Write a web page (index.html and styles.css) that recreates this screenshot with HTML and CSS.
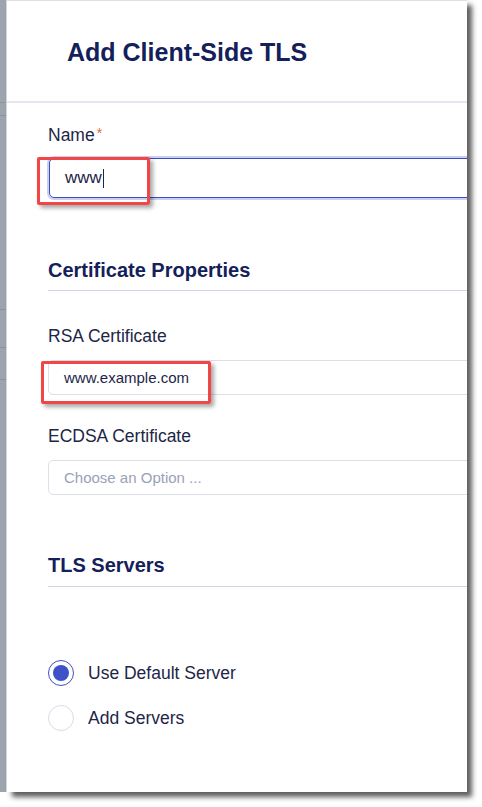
FILE: index.html
```html
<!DOCTYPE html>
<html>
<head>
<meta charset="utf-8">
<link rel="stylesheet" href="styles.css">
</head>
<body>
<div class="page">
  <div class="backdrop">
    <div class="bd-row r1"></div>
    <div class="bd-row r2"></div>
    <div class="bd-row r3"></div>
    <div class="bd-row r4"></div>
    <div class="bd-row r5"></div>
  </div>
  <div class="drawer">
    <header class="drawer-head">
      <h1 class="title">Add Client-Side TLS</h1>
    </header>
    <div class="drawer-body">
      <div class="field field-name">
        <label class="label">Name<span class="req">*</span></label>
        <div class="input input-focus"><span class="value value-lg">www</span><span class="caret"></span></div>
        <div class="annot annot-name"></div>
      </div>

      <h2 class="section">Certificate Properties</h2>

      <div class="field field-rsa">
        <label class="label">RSA Certificate</label>
        <div class="input"><span class="value">www.example.com</span></div>
        <div class="annot annot-rsa"></div>
      </div>

      <div class="field field-ecdsa">
        <label class="label">ECDSA Certificate</label>
        <div class="input"><span class="placeholder">Choose an Option ...</span></div>
      </div>

      <h2 class="section section-tls">TLS Servers</h2>

      <div class="radios">
        <div class="radio-row">
          <span class="radio checked"><span class="dot"></span></span>
          <span class="radio-label">Use Default Server</span>
        </div>
        <div class="radio-row">
          <span class="radio"></span>
          <span class="radio-label">Add Servers</span>
        </div>
      </div>
    </div>
  </div>
</div>
</body>
</html>
```
FILE: styles.css
```css
* { box-sizing: border-box; }
html, body { margin: 0; padding: 0; background: #ffffff; }
body {
  font-family: "Liberation Sans", Arial, sans-serif;
  color: #1d2647;
}
.page {
  display: flex;
  align-items: flex-start;
  width: 482px;
  height: 807px;
  overflow: hidden;
}
.backdrop {
  width: 7px;
  height: 792px;
  background: #9ea4ae;
  border-right: 1px solid #d4d7dd;
  display: flex;
  flex-direction: column;
}
.bd-row { border-bottom: 1px solid #8e949e; flex: none; }
.r1 { height: 103px; }
.r2 { height: 13px; }
.r3 { height: 194px; }
.r4 { height: 38px; }
.r5 { height: 32px; }

.drawer {
  position: relative;
  width: 460px;
  height: 792px;
  background: #ffffff;
  border-top: 1px solid #e0e0e0;
  box-shadow: 5px 5px 5px rgba(40, 40, 40, 0.75);
  overflow: hidden;
  flex: none;
}
.drawer-head {
  height: 102px;
  border-bottom: 2px solid #e4e7f2;
  display: flex;
  align-items: center;
  padding-left: 60px;
}
.title {
  margin: 0;
  font-size: 25px;
  font-weight: 700;
  color: #14205a;
  line-height: 30px;
  padding-top: 2px;
}
.drawer-body {
  padding-left: 41px;
}
.field { position: relative; }
.label {
  display: block;
  font-size: 17.5px;
  line-height: 20px;
  color: #1d2647;
}
.req { color: #f0643c; font-size: 14px; vertical-align: top; margin-left: 2px; position: relative; top: -2px; }
.field-name { padding-top: 22px; }
.field-name .label { margin-bottom: 13px; }
.input {
  width: 480px;
  height: 35px;
  border: 1px solid #dcdfe8;
  border-radius: 5px;
  display: flex;
  align-items: center;
  padding-left: 15px;
}
.input-focus {
  margin-left: 1px;
  height: 40px;
  border-color: #3b4ec0;
  box-shadow: 0 0 0 2px #cbd0f1;
}
.value { font-size: 15px; color: #1d2647; }
.value-lg { font-size: 17px; }
.caret {
  display: inline-block;
  width: 1px;
  height: 19px;
  background: #1d2647;
  margin-left: 1px;
}
.placeholder { font-size: 15px; color: #9aa1b5; }

.annot {
  position: absolute;
  border: 3px solid #f24646;
  border-radius: 2px;
  box-shadow: 3px 3px 4px rgba(0, 0, 0, 0.35);
}
.annot-name { left: -11px; top: 54px; width: 113px; height: 48px; }
.annot-rsa { left: -7px; top: 70px; width: 170px; height: 43px; }

.section {
  margin: 0;
  font-size: 20px;
  font-weight: 700;
  line-height: 24px;
  color: #14205a;
  padding-bottom: 8px;
  border-bottom: 1px solid #d2d6e2;
  width: 440px;
}
.field-name + .section { margin-top: 60px; }
.field-rsa { padding-top: 35px; }
.field-rsa .label, .field-ecdsa .label { margin-bottom: 14px; }
.field-ecdsa { padding-top: 31px; }
.section-tls { margin-top: 58px; padding-bottom: 9px; }

.radios {
  padding-top: 73px;
  display: flex;
  flex-direction: column;
  gap: 19px;
}
.radio-row {
  display: flex;
  align-items: center;
  height: 26px;
}
.radio {
  width: 26px;
  height: 26px;
  border-radius: 50%;
  border: 1px solid #dadce6;
  display: flex;
  align-items: center;
  justify-content: center;
  flex: none;
}
.radio.checked { border: 1.5px solid #3d51c9; }
.dot {
  width: 16px;
  height: 16px;
  border-radius: 50%;
  background: #3d51c9;
}
.radio-label {
  margin-left: 14px;
  font-size: 17.5px;
  color: #1d2647;
}
```
